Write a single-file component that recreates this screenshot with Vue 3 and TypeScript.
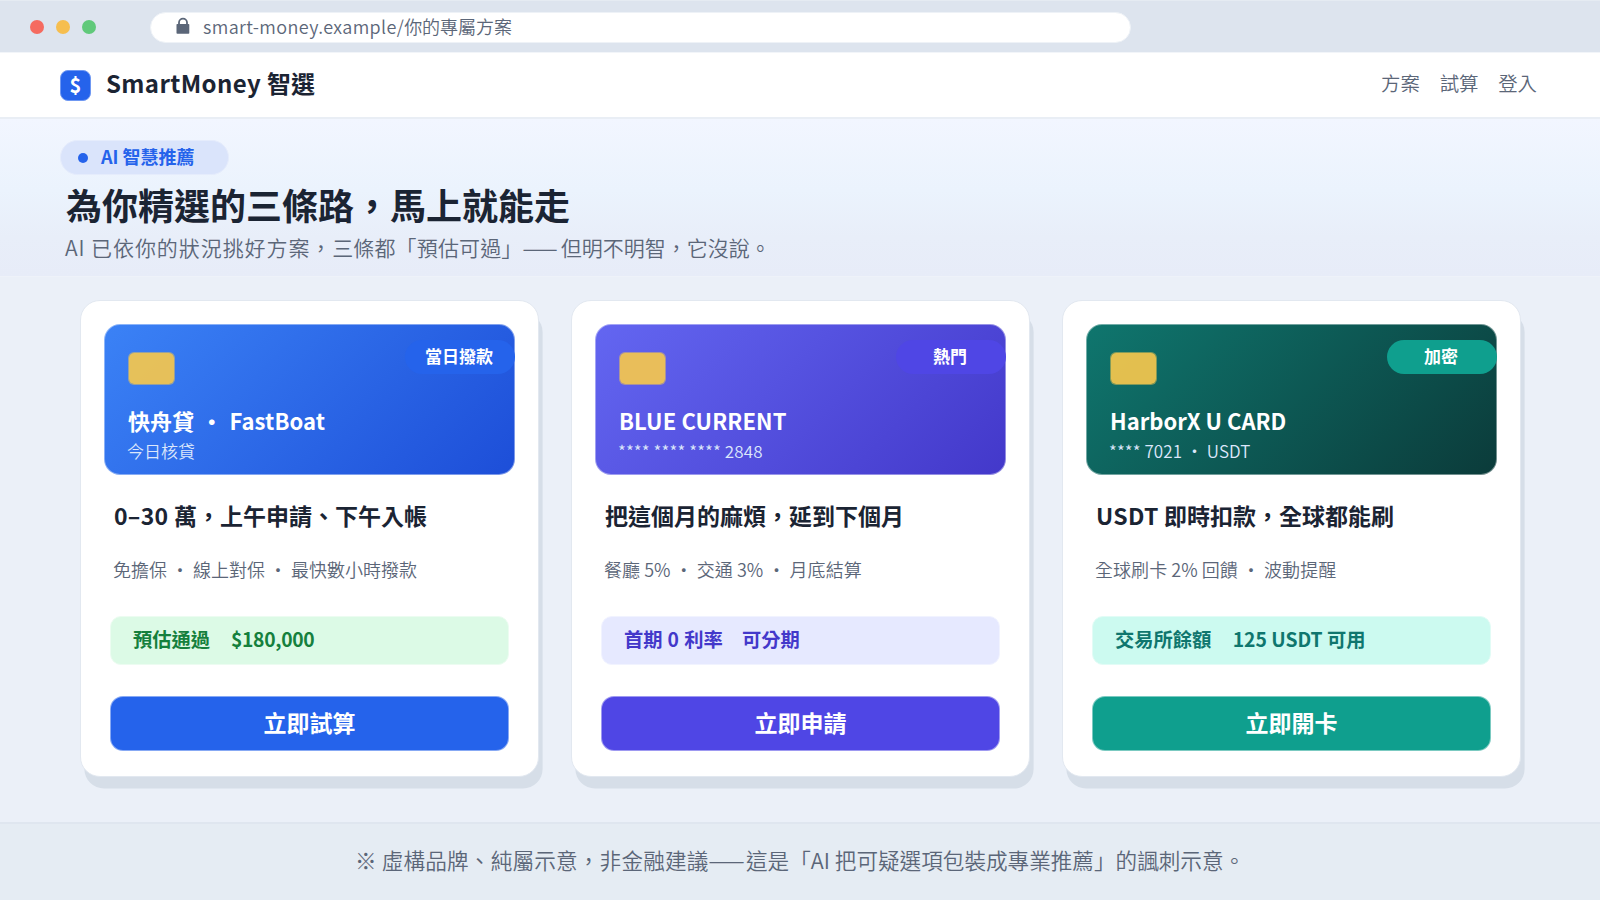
<script setup lang="ts">
interface Plan {
  theme: string
  tag: string
  name: string
  detail: string
  headline: string
  perks: string
  status: string
  action: string
}

interface Run {
  text: string
  latin: boolean
}

const links: string[] = ['方案', '試算', '登入']

const plans: Plan[] = [
  {
    theme: 'blue',
    tag: '當日撥款',
    name: '快舟貸 ・ FastBoat',
    detail: '今日核貸',
    headline: '0–30 萬，上午申請、下午入帳',
    perks: '免擔保 ・ 線上對保 ・ 最快數小時撥款',
    status: '預估通過　$180,000',
    action: '立即試算',
  },
  {
    theme: 'indigo',
    tag: '熱門',
    name: 'BLUE CURRENT',
    detail: '**** **** **** 2848',
    headline: '把這個月的麻煩，延到下個月',
    perks: '餐廳 5% ・ 交通 3% ・ 月底結算',
    status: '首期 0 利率　可分期',
    action: '立即申請',
  },
  {
    theme: 'teal',
    tag: '加密',
    name: 'HarborX U CARD',
    detail: '**** 7021 ・ USDT',
    headline: 'USDT 即時扣款，全球都能刷',
    perks: '全球刷卡 2% 回饋 ・ 波動提醒',
    status: '交易所餘額　125 USDT 可用',
    action: '立即開卡',
  },
]

// Splits mixed text so Latin runs can carry their own tracking.
function runs(text: string): Run[] {
  const parts = text.match(/[\x20-\x7e–]+|[^\x20-\x7e–]+/g) ?? []
  return parts.map((t) => ({ text: t, latin: /^[\x20-\x7e–]/.test(t) }))
}
</script>

<template>
  <div class="page">
    <div class="chrome">
      <div class="lights"><i class="red"></i><i class="amber"></i><i class="green"></i></div>
      <div class="address">
        <svg class="lock" width="14" height="18" viewBox="0 0 14 18">
          <path d="M3 7.6V5.6a4 4 0 0 1 8 0V7.6" fill="none" stroke="#5b6678" stroke-width="1.8" />
          <rect x="0.5" y="7" width="12.8" height="9.8" rx="0.8" fill="#5b6678" />
        </svg>
        <span class="url"><span class="latin">smart-money.example/</span>你的專屬方案</span>
      </div>
    </div>

    <header class="nav">
      <div class="logo">$</div>
      <div class="brand"><span class="latin">SmartMoney </span>智選</div>
      <nav class="links"><a v-for="l in links" :key="l">{{ l }}</a></nav>
    </header>

    <section class="hero">
      <div class="badge"><i></i><span>AI 智慧推薦</span></div>
      <h1>為你精選的三條路，馬上就能走</h1>
      <p><span class="wide">AI 已依你的狀況挑好方案，</span><span class="mid">三條都「預估可過」</span><span class="dash">——</span><span> 但明不明智，它沒說。</span></p>
    </section>

    <main class="plans">
      <article v-for="p in plans" :key="p.theme" class="plan" :class="p.theme">
        <div class="art">
          <div class="tag">{{ p.tag }}</div>
          <div class="chip"></div>
          <div class="name">{{ p.name }}</div>
          <div class="detail">{{ p.detail }}</div>
        </div>
        <h2><span v-for="(r, i) in runs(p.headline)" :key="i" :class="{ latin: r.latin }">{{ r.text }}</span></h2>
        <div class="perks">{{ p.perks }}</div>
        <div class="status"><span v-for="(r, i) in runs(p.status)" :key="i" :class="{ latin: r.latin }">{{ r.text }}</span></div>
        <button type="button">{{ p.action }}</button>
      </article>
    </main>

    <footer><span class="lead">※ 虛構品牌、純屬示意，非金融建議</span><span class="dash">——</span> 這是「AI 把可疑選項包裝成專業推薦」的諷刺示意。</footer>
  </div>
</template>

<style>
html,
body {
  margin: 0;
  overflow: hidden;
}
</style>

<style scoped>
* {
  box-sizing: border-box;
}
.page {
  width: 1600px;
  height: 900px;
  display: flex;
  flex-direction: column;
  overflow: hidden;
  background: #ebf0f8;
  color: #1b2433;
  font-family: 'Noto Sans CJK TC', sans-serif;
  white-space: pre;
}
.url,
.links,
.hero p,
.detail,
.perks,
footer {
  font-weight: 350;
}
.chrome {
  height: 52px;
  display: flex;
  align-items: flex-start;
  background: #dde4ee;
  border-top: 1px solid #e5ebf2;
  padding: 11px 0 0 30.4px;
}
.lights {
  display: flex;
  gap: 12px;
  margin: 7.5px 53.6px 0 0;
}
.lights i {
  width: 14px;
  height: 14px;
  border-radius: 50%;
}
.red { background: #f56b60; }
.amber { background: #f6be4f; }
.green { background: #60c97a; }
.address {
  width: 981px;
  height: 31px;
  border: 1px solid #eef2f7;
  border-radius: 16px;
  background: #fff;
  display: flex;
  align-items: flex-start;
  padding: 4px 0 0 25px;
}
.url {
  margin-left: 13px;
  font-size: 18px;
  line-height: 18px;
  color: #5b6678;
}
.url .latin { letter-spacing: 0.38px; }
.nav {
  height: 67px;
  display: flex;
  align-items: center;
  background: #fff;
  border-top: 1px solid #f2f5f9;
  border-bottom: 2px solid #e9eef5;
  padding: 0 63px 5px 60px;
}
.logo {
  align-self: flex-start;
  margin-top: 17px;
  width: 31px;
  height: 31px;
  border: 1px solid #6f98f2;
  border-radius: 8px;
  background: #2563eb;
  color: #fff;
  font-size: 20px;
  font-weight: 700;
  line-height: 27px;
  text-align: center;
}
.brand {
  margin-left: 15px;
  font-size: 24px;
  line-height: 32px;
  font-weight: 700;
}
.brand .latin { letter-spacing: 0.38px; }
.links {
  margin-left: auto;
  display: flex;
  gap: 19.8px;
  font-size: 19.4px;
  line-height: 28px;
  color: #5b6678;
}
.hero {
  height: 158px;
  padding: 21px 0 0 60px;
  background: linear-gradient(#f2f6ff, #ebf3fd 45%, #e8eef9 75%, #e7ecf8);
  border-bottom: 1px solid #eef2f9;
}
.badge {
  width: 169px;
  height: 35px;
  border: 1px solid #e5ecfc;
  border-radius: 18px;
  background: #dae4fb;
  color: #2563eb;
  display: flex;
  align-items: center;
  padding-left: 17.4px;
  font-size: 18px;
  font-weight: 700;
}
.badge span {
  line-height: 31px;
  padding-bottom: 2px;
}
.badge i {
  width: 10px;
  height: 10px;
  border-radius: 50%;
  background: #2563eb;
  margin-right: 12.6px;
}
h1 {
  margin: 4px 0 0 6px;
  font-size: 36px;
  line-height: 50px;
  font-weight: 700;
}
.hero p {
  margin: 2px 0 0 5px;
  font-size: 21px;
  line-height: 32px;
  color: #5b6678;
}
.wide { letter-spacing: 0.92px; }
.mid { letter-spacing: 0.13px; }
.dash { margin-right: -1.5px; }
.plans {
  height: 545px;
  display: grid;
  grid-template-columns: repeat(3, 459px);
  column-gap: 32px;
  padding: 23px 0 0 80px;
  align-items: start;
}
.plan {
  height: 477px;
  border-radius: 20px;
  background: #fff;
  border: 1px solid #e2e8f0;
  box-shadow: 4px 12px 0 -0.4px #d6dee8;
  padding: 23px 23px 0;
  display: flex;
  flex-direction: column;
}
.art {
  height: 151px;
  border: 1px solid rgba(255, 255, 255, 0.42);
  border-radius: 16px;
  color: #fff;
  display: flex;
  flex-direction: column;
  padding: 15px 0 0 23px;
}
.tag {
  align-self: flex-end;
  width: 110px;
  height: 34px;
  margin-right: -1px;
  padding-right: 2px;
  border-radius: 17px;
  font-size: 17px;
  line-height: 32px;
  font-weight: 700;
  text-align: center;
}
.chip {
  width: 47px;
  height: 33px;
  border: 1px solid rgba(245, 199, 77, 0.5);
  border-radius: 6px;
  margin-top: -22px;
  background: rgba(245, 199, 77, 0.92) padding-box;
}
.name {
  margin-top: 19px;
  font-size: 22px;
  line-height: 32px;
  font-weight: 700;
}
.blue .name { word-spacing: 1.4px; letter-spacing: 0.1px; }
.indigo .name { letter-spacing: 0.12px; }
.detail {
  margin: 1px 0 0 -1px;
  font-size: 17px;
  line-height: 28px;
  color: #dce7fb;
}
.indigo .detail { letter-spacing: 0.11px; }
.teal .detail { letter-spacing: 0.07px; }
h2 {
  margin: 23px 0 0 10px;
  font-size: 23px;
  line-height: 34px;
  font-weight: 700;
}
h2 .latin { letter-spacing: 0.3px; }
.perks {
  margin: 22px 0 0 9px;
  font-size: 18px;
  line-height: 30px;
  color: #5b6678;
}
.indigo .perks,
.teal .perks { letter-spacing: 0.05px; }
.status {
  height: 49px;
  margin: 32px 6px 0;
  padding-left: 22px;
  border: 1px solid;
  border-radius: 11px;
  font-size: 19.3px;
  line-height: 45px;
  font-weight: 700;
}
.blue .status .latin { margin-left: 1.5px; letter-spacing: -0.3px; }
.indigo .status .latin { letter-spacing: 0.5px; }
.teal .status .latin { margin-left: 2px; }
button {
  height: 55px;
  margin: 31px 6px 0;
  padding: 0 0 3px;
  border: 1px solid rgba(255, 255, 255, 0.45);
  border-radius: 13px;
  color: #fff;
  font: 700 23px/50px 'Noto Sans CJK TC', sans-serif;
}
.blue .art { background: linear-gradient(135deg, #3b82f6, #1d4ed8) border-box; }
.blue .tag,
.blue button { background: #2563eb; }
.blue .status { background: #dcfae6; color: #15803d; border-color: #ecfcf1; }
.indigo .art { background: linear-gradient(135deg, #6366f1, #4338ca) border-box; }
.indigo .tag,
.indigo button { background: #4f46e5; }
.indigo .status { background: #e6e9ff; color: #4338ca; border-color: #f1f3ff; }
.teal .art { background: linear-gradient(135deg, #0f766e, #0b3b3a) border-box; }
.teal .tag,
.teal button { background: #0f9f8e; }
.teal .status { background: #ccfaf0; color: #0f766e; border-color: #e2fcf6; }
footer {
  height: 78px;
  border-top: 2px solid #dfe6ef;
  background: #e5ecf3;
  color: #5b6678;
  font-size: 21.6px;
  line-height: 72px;
  text-align: center;
}
.lead { letter-spacing: 0.2px; }
footer .dash { margin-right: -3.5px; }
</style>
